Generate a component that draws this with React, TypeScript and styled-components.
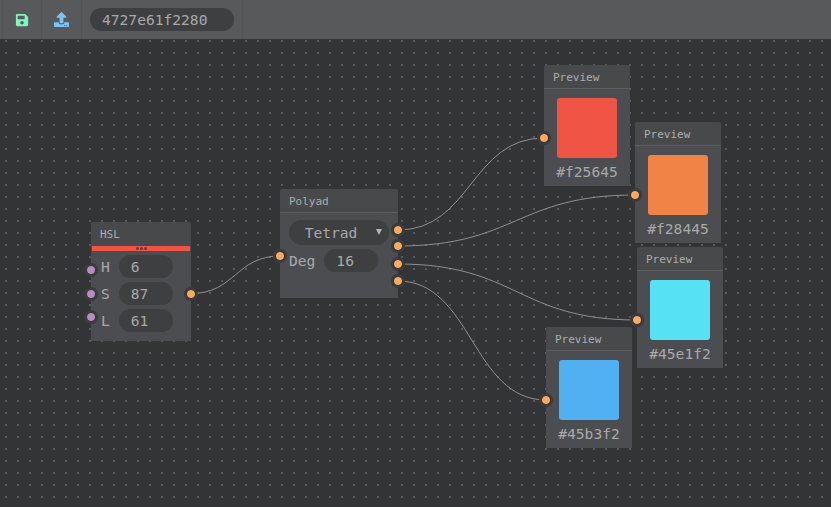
import React from 'react';
import styled, { createGlobalStyle } from 'styled-components';
import { FaSave, FaUpload } from 'react-icons/fa';

const GlobalStyle = createGlobalStyle`
  html, body {
    margin: 0;
    padding: 0;
    height: 100%;
    overflow: hidden;
    background: #333436;
  }
`;

const MONO = `'DejaVu Sans Mono', 'Liberation Mono', monospace`;

const Page = styled.div`
  width: 831px;
  height: 507px;
  display: flex;
  flex-direction: column;
  font-family: ${MONO};
`;

const Toolbar = styled.header`
  height: 39px;
  flex: none;
  display: flex;
  align-items: stretch;
  padding-left: 2px;
  background: #58595b;
  box-shadow: 0 1px 0 #3c3d3f;
`;

const ToolButton = styled.button<{ $color: string; $w: number; $size: number }>`
  width: ${(p) => p.$w}px;
  padding: 0;
  border: none;
  border-left: 1px solid #525355;
  background: none;
  color: ${(p) => p.$color};
  display: flex;
  align-items: center;
  justify-content: center;
  font-size: ${(p) => p.$size}px;
`;

const IdField = styled.div`
  display: flex;
  align-items: center;
  border-left: 1px solid #525355;
  border-right: 1px solid #525355;
  padding: 0 8px;
`;

const IdPill = styled.div`
  width: 144px;
  height: 23px;
  box-sizing: border-box;
  padding-left: 12px;
  border-radius: 12px;
  background: #3e3f41;
  color: #a9a9a9;
  font-size: 14.6px;
  line-height: 23px;
`;

/* dots come from the base colour showing through two tiled masks */
const Canvas = styled.main`
  position: relative;
  flex: 1;
  overflow: hidden;
  background-color: #595a5c;
  background-image:
    linear-gradient(to right, #333436 10px, transparent 10px),
    linear-gradient(to bottom, #333436 10px, transparent 10px);
  background-size: 12px 12px;
  background-position: 7px 3px;
`;

const Wires = styled.svg`
  position: absolute;
  left: 0;
  top: -39px;
  width: 831px;
  height: 507px;
  z-index: 2;
  pointer-events: none;
`;

const Node = styled.section<{ $x: number; $y: number; $w: number; $h: number }>`
  position: absolute;
  left: ${(p) => p.$x}px;
  top: ${(p) => p.$y - 39}px;
  width: ${(p) => p.$w}px;
  height: ${(p) => p.$h}px;
  background: #4c4d50;
  border-radius: 3px 3px 0 0;
  color: #a9a9a9;
  z-index: 1;
`;

const NodeTitle = styled.div<{ $line?: boolean }>`
  height: 24px;
  box-sizing: border-box;
  padding: 1px 0 0 9px;
  background: #48494b;
  border-radius: 3px 3px 0 0;
  border-bottom: ${(p) => (p.$line ? '1px solid #5c5d5f' : 'none')};
  font-size: 11px;
  line-height: 23px;
  color: #adadad;
`;

const ColorBar = styled.div`
  height: 5px;
  margin: 0 1px;
  background: #ef5444;
  display: flex;
  justify-content: center;
  align-items: center;
  gap: 1px;
`;

const BarDot = styled.i`
  width: 3px;
  height: 3px;
  border-radius: 50%;
  background: #6b3a34;
`;

const Fields = styled.div`
  display: flex;
  flex-direction: column;
  gap: 4px;
  padding: 4px 0 0 10px;
`;

const Row = styled.div`
  display: flex;
  align-items: center;
  gap: 9px;
`;

const Label = styled.span`
  font-size: 14.6px;
  line-height: 23px;
  color: #a9a9a9;
`;

const Input = styled.div<{ $w: number }>`
  width: ${(p) => p.$w}px;
  height: 23px;
  box-sizing: border-box;
  padding-left: 12px;
  border-radius: 12px;
  background: #3e3f41;
  font-size: 14.6px;
  line-height: 23px;
  color: #a9a9a9;
`;

const Select = styled.div`
  position: relative;
  width: 100px;
  height: 25px;
  border-radius: 12.5px;
  background: #3e3f41;
  font-size: 14.6px;
  line-height: 25px;
  text-align: center;
  padding-right: 16px;
  box-sizing: border-box;
  color: #a9a9a9;
`;

const Caret = styled.span`
  position: absolute;
  right: 7px;
  top: 9px;
  width: 0;
  height: 0;
  border-left: 3px solid transparent;
  border-right: 3px solid transparent;
  border-top: 6px solid #b5b5b5;
`;

const PolyadBody = styled.div`
  display: flex;
  flex-direction: column;
  gap: 4px;
  padding: 7px 0 0 9px;
`;

const PreviewBody = styled.div`
  display: flex;
  flex-direction: column;
  align-items: center;
  padding-top: 9px;
`;

const Swatch = styled.div<{ $color: string }>`
  width: 60px;
  height: 60px;
  border-radius: 3px;
  background: ${(p) => p.$color};
`;

const HexLabel = styled.div`
  margin-top: 5px;
  font-size: 14.6px;
  line-height: 18px;
  color: #a9a9a9;
`;

const Port = styled.span<{ $x: number; $y: number; $in?: boolean }>`
  position: absolute;
  left: ${(p) => p.$x - 6.75}px;
  top: ${(p) => p.$y - 45.75}px;
  width: 7.5px;
  height: 7.5px;
  border: 3px solid #3a3b3d;
  border-radius: 50%;
  background: ${(p) => (p.$in ? '#b88dc0' : '#fba95f')};
  background-clip: padding-box;
  box-sizing: content-box;
  z-index: 3;
`;

const wires = [
  'M191 293.5 C 235 293.5, 236 256, 280 256',
  'M398 230 C 471 230, 471 138, 544 138',
  'M398 246 C 516 246, 517 195, 635 195',
  'M398 264 C 517 264, 518 320, 637 320',
  'M398 281 C 472 281, 472 400, 546 400',
];

const previews = [
  { x: 544, y: 65, color: '#ef5444', hex: '#f25645' },
  { x: 635, y: 122, color: '#f08345', hex: '#f28445' },
  { x: 637, y: 247, color: '#56e1f5', hex: '#45e1f2' },
  { x: 546, y: 327, color: '#50b0f2', hex: '#45b3f2' },
];

const ports = [
  { x: 91, y: 270, in: true },
  { x: 91, y: 294, in: true },
  { x: 91, y: 317, in: true },
  { x: 191, y: 294 },
  { x: 280, y: 256 },
  { x: 398, y: 230 },
  { x: 398, y: 246 },
  { x: 398, y: 264 },
  { x: 398, y: 281 },
  { x: 544, y: 138 },
  { x: 635, y: 195 },
  { x: 637, y: 320 },
  { x: 546, y: 400 },
];

const App = () => {
  return (
    <Page>
      <GlobalStyle />
      <Toolbar>
        <ToolButton $color="#80f5c0" $w={39} $size={14}>
          <FaSave />
        </ToolButton>
        <ToolButton $color="#7cc4f8" $w={40} $size={15}>
          <FaUpload />
        </ToolButton>
        <IdField>
          <IdPill>4727e61f2280</IdPill>
        </IdField>
      </Toolbar>
      <Canvas>
        <Node $x={91} $y={222} $w={100} $h={119}>
          <NodeTitle>HSL</NodeTitle>
          <ColorBar>
            <BarDot />
            <BarDot />
            <BarDot />
          </ColorBar>
          <Fields>
            {[
              ['H', '6'],
              ['S', '87'],
              ['L', '61'],
            ].map(([label, value]) => (
              <Row key={label}>
                <Label>{label}</Label>
                <Input $w={54}>{value}</Input>
              </Row>
            ))}
          </Fields>
        </Node>

        <Node $x={280} $y={189} $w={118} $h={109}>
          <NodeTitle $line>Polyad</NodeTitle>
          <PolyadBody>
            <Select>
              Tetrad
              <Caret />
            </Select>
            <Row>
              <Label>Deg</Label>
              <Input $w={54}>16</Input>
            </Row>
          </PolyadBody>
        </Node>

        {previews.map((p) => (
          <Node key={p.hex} $x={p.x} $y={p.y} $w={86} $h={121}>
            <NodeTitle $line>Preview</NodeTitle>
            <PreviewBody>
              <Swatch $color={p.color} />
              <HexLabel>{p.hex}</HexLabel>
            </PreviewBody>
          </Node>
        ))}

        <Wires viewBox="0 0 831 507">
          {wires.map((d) => (
            <path key={d} d={d} fill="none" stroke="#8f9091" strokeWidth="1" />
          ))}
        </Wires>

        {ports.map((p) => (
          <Port key={`${p.x}-${p.y}`} $x={p.x} $y={p.y} $in={p.in} />
        ))}
      </Canvas>
    </Page>
  );
};

export default App;
